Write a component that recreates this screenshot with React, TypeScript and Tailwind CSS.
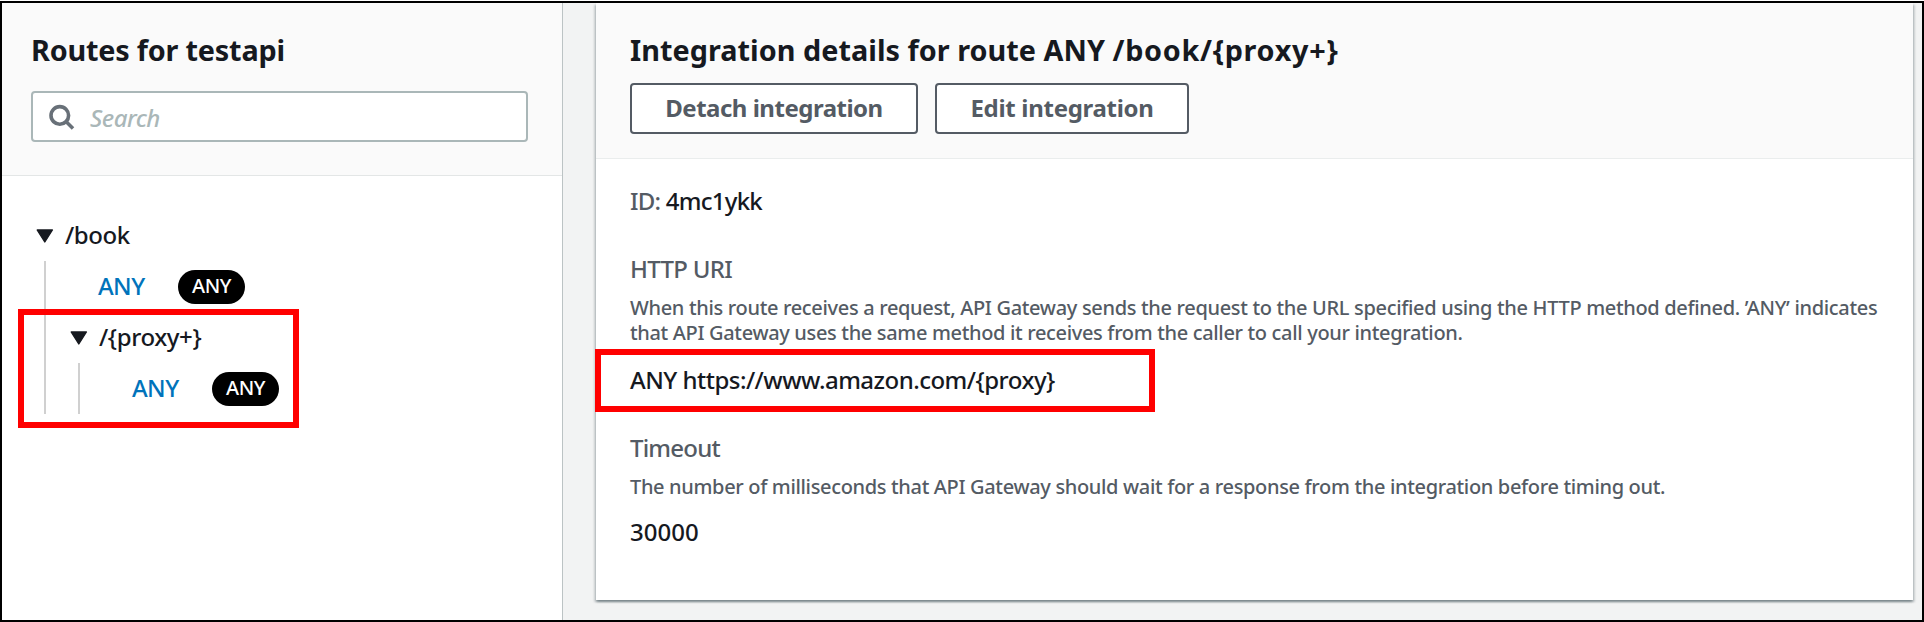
import type { ReactNode } from "react";

function SearchIcon() {
  return (
    <svg className="size-7 shrink-0" viewBox="0 0 28 28" fill="none" stroke="#687078" strokeWidth="3.6">
      <circle cx="12.8" cy="12.4" r="8.8" />
      <path d="M19 18.6 L26 25.6" />
    </svg>
  );
}

function Caret() {
  return (
    <svg className="h-[14px] w-[18px] shrink-0" viewBox="0 0 18 14">
      <path d="M1.2 1 H16.4 L8.8 13 Z" fill="#16191f" stroke="#16191f" strokeWidth="1.4" strokeLinejoin="round" />
    </svg>
  );
}

function Branch({ label, children }: { label: string; children: ReactNode }) {
  return (
    <li>
      <div className="flex h-[51px] items-center gap-[11px]">
        <Caret />
        <span className="pb-[2px] tracking-[-0.4px]">{label}</span>
      </div>
      <ul className="ml-2 border-l-2 border-[#d0d0d0]">{children}</ul>
    </li>
  );
}

function Method() {
  return (
    <li className="flex h-[51px] items-center pl-[52px]">
      <a href="#" className="w-[80px] pb-[2px] tracking-[-0.6px] text-[#0073bb]">
        ANY
      </a>
      <span className="flex h-[34px] w-[67px] items-center justify-center rounded-full bg-black pb-[2px] text-[20px] tracking-[-0.5px] text-white">
        ANY
      </span>
    </li>
  );
}

function Button({ className, children }: { className: string; children: ReactNode }) {
  return (
    <button
      className={`flex h-[51px] items-center justify-center rounded-[4px] border-2 border-[#545b64] bg-white pb-[2px] font-bold text-[#545b64] ${className}`}
    >
      {children}
    </button>
  );
}

function Description({ children }: { children: ReactNode }) {
  return <p className="mt-2 text-[20px] leading-[25.4px] text-[#545b64]">{children}</p>;
}

export default function App() {
  return (
    <div className="h-[622px] w-[1924px] overflow-hidden bg-white pt-px font-['Noto_Sans',sans-serif] text-[24px] font-medium leading-[36px] text-[#16191f]">
      <div className="relative flex h-[621px] border-2 border-black bg-[#f2f3f3]">
        <aside className="w-[561px] shrink-0 border-r border-[#bcc3c4] bg-white">
          <header className="h-[173px] border-b border-[#e3e6e6] bg-[#fafafa] pl-[29px] pt-[29px]">
            <h2 className="text-[28.8px] font-bold tracking-[-0.2px]">Routes for testapi</h2>
            <label className="mt-[23px] flex h-[51px] w-[497px] items-center rounded-[4px] border-2 border-[#aab7b8] bg-white pl-[14px]">
              <SearchIcon />
              <span className="pl-[15px] pt-[2px] italic tracking-[-0.5px] text-[#aab7b8]">Search</span>
            </label>
          </header>
          <ul className="pl-[34px] pt-[34px]">
            <Branch label="/book">
              <Method />
              <div className="pl-6">
                <Branch label="/{proxy+}">
                  <Method />
                </Branch>
              </div>
            </Branch>
          </ul>
        </aside>

        <main className="ml-[33px] h-[597px] w-[1317px] bg-white shadow-[0_2px_2px_0_rgba(0,28,36,0.3),2px_2px_2px_0_rgba(0,28,36,0.15),-2px_2px_2px_0_rgba(0,28,36,0.15)]">
          <header className="h-[156px] border-b border-[#eaeded] bg-[#fafafa] pl-[34px] pt-[29px]">
            <h2 className="text-[28.8px] font-bold tracking-[0.03px]">
              Integration details for route ANY <span className="tracking-[0.7px]">/book/&#123;proxy+&#125;</span>
            </h2>
            <div className="mt-[15px] flex gap-[17px]">
              <Button className="w-[288px] tracking-[-0.5px]">Detach integration</Button>
              <Button className="w-[254px] tracking-[-0.3px]">Edit integration</Button>
            </div>
          </header>
          <div className="pl-[34px] pt-6">
            <p className="tracking-[-0.75px]">
              <span className="text-[#545b64]">ID:</span> 4mc1ykk
            </p>
            <h3 className="mt-8 tracking-[-0.7px] text-[#545b64]">HTTP URI</h3>
            <Description>
              <span className="block whitespace-nowrap tracking-[-0.33px]">
                When this route receives a request, API Gateway sends the request to the URL specified using the HTTP
                method defined. ’ANY’ indicates
              </span>
              <span className="block whitespace-nowrap tracking-[-0.34px]">
                that API Gateway uses the same method it receives from the caller to call your integration.
              </span>
            </Description>
            <p className="mt-4 tracking-[-0.52px]">ANY https://www.amazon.com/&#123;proxy&#125;</p>
            <h3 className="mt-8 tracking-[-0.8px] text-[#545b64]">Timeout</h3>
            <Description>
              <span className="block whitespace-nowrap tracking-[-0.34px]">
                The number of milliseconds that API Gateway should wait for a response from the integration before
                timing out.
              </span>
            </Description>
            <p className="mt-[15px]">30000</p>
          </div>
        </main>

        <div className="absolute left-[16px] top-[306px] h-[119px] w-[281px] border-6 border-[#ff0000]" />
        <div className="absolute left-[593px] top-[346px] h-[63px] w-[560px] border-6 border-[#ff0000]" />
      </div>
    </div>
  );
}
